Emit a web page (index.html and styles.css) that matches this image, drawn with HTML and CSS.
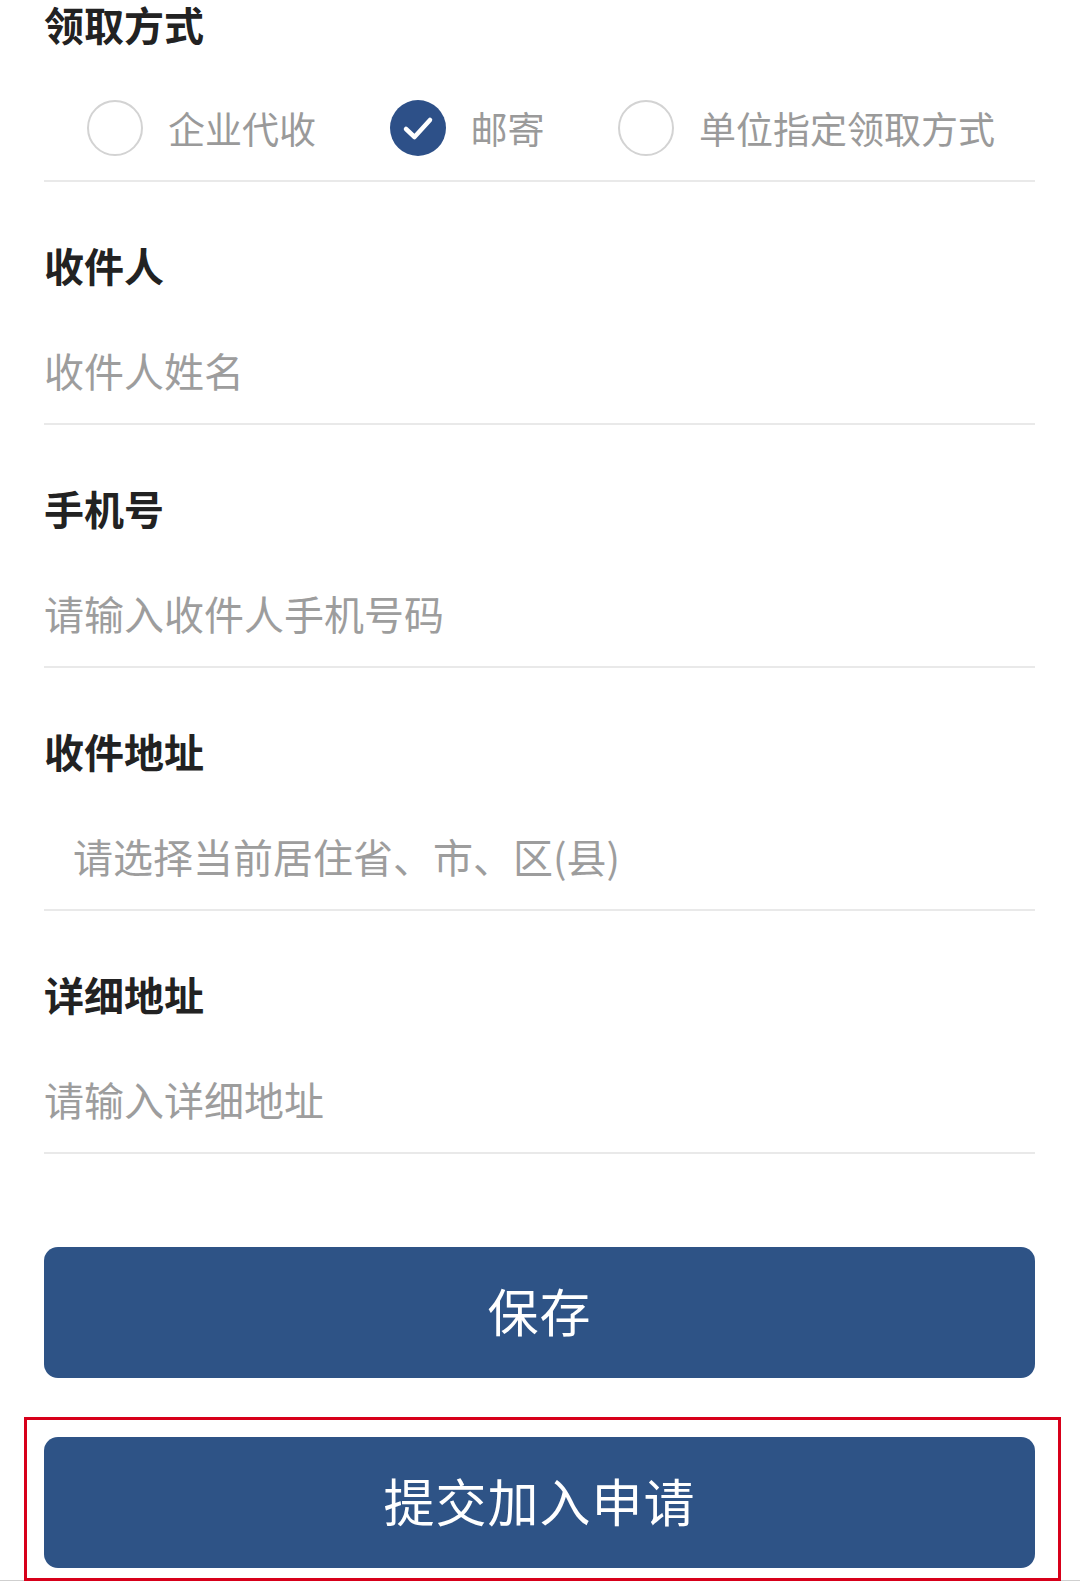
FILE: index.html
```html
<!DOCTYPE html>
<html lang="zh-CN">
<head>
  <meta charset="UTF-8">
  <title>领取方式</title>
  <link rel="stylesheet" href="styles.css">
</head>
<body>
  <div class="page">
    <div class="section pickup">
      <div class="section-title">领取方式</div>
      <div class="options">
        <label class="option">
          <span class="radio"></span>
          <span class="option-text">企业代收</span>
        </label>
        <label class="option">
          <span class="radio checked">
            <svg width="56" height="56" viewBox="0 0 56 56">
              <path d="M16 29 L24.5 37 L40 20" fill="none" stroke="#fff" stroke-width="4.5" stroke-linecap="round" stroke-linejoin="round"/>
            </svg>
          </span>
          <span class="option-text">邮寄</span>
        </label>
        <label class="option">
          <span class="radio"></span>
          <span class="option-text">单位指定领取方式</span>
        </label>
      </div>
    </div>

    <div class="section field">
      <div class="section-title">收件人</div>
      <input class="field-input" type="text" placeholder="收件人姓名">
    </div>

    <div class="section field">
      <div class="section-title">手机号</div>
      <input class="field-input" type="tel" placeholder="请输入收件人手机号码">
    </div>

    <div class="section field">
      <div class="section-title">收件地址</div>
      <div class="picker">请选择当前居住省、市、区(县)</div>
    </div>

    <div class="section field">
      <div class="section-title">详细地址</div>
      <input class="field-input" type="text" placeholder="请输入详细地址">
    </div>

    <button class="btn save" type="button">保存</button>

    <div class="submit-wrap">
      <button class="btn" type="button">提交加入申请</button>
      <div class="highlight"></div>
    </div>
  </div>
  <div class="bottom-bar"></div>
</body>
</html>
```

FILE: styles.css
```css
body {
  margin: 0;
  background: #fff;
  font-family: "Noto Sans CJK SC", "Noto Sans", sans-serif;
  color: #222;
}

.page {
  padding: 2px 45px 0 44px;
}

.section {
  border-bottom: 2px solid #e9e9e9;
}

.section-title {
  font-size: 40px;
  font-weight: 700;
  line-height: 48px;
  color: #222;
}

.pickup .section-title {
  line-height: 44px;
}

.options {
  display: flex;
  justify-content: space-between;
  align-items: center;
  padding: 0 40px 0 43px;
  margin-top: 54px;
  padding-bottom: 24px;
}

.option {
  display: flex;
  align-items: center;
  gap: 25px;
}

.radio {
  width: 56px;
  height: 56px;
  box-sizing: border-box;
  border: 2px solid #d3d3d3;
  border-radius: 50%;
  display: block;
}

.radio.checked {
  border: none;
  background: #2d5088;
}

.radio svg {
  display: block;
}

.option-text {
  font-size: 37px;
  line-height: 56px;
  color: #9a9a9a;
}

.field .section-title {
  margin-top: 59px;
}

.field-input,
.picker {
  display: block;
  width: 100%;
  height: 48px;
  margin-top: 57px;
  margin-bottom: 29px;
  padding: 0;
  border: none;
  outline: none;
  font-family: inherit;
  font-size: 40px;
  line-height: 48px;
  color: #333;
  background: transparent;
}

.field-input::placeholder {
  color: #9d9d9d;
}

.picker {
  padding-left: 29px;
  box-sizing: border-box;
  color: #9d9d9d;
}

.btn {
  display: block;
  width: 100%;
  height: 131px;
  padding: 0 0 6px;
  border: none;
  border-radius: 14px;
  background: #2e5386;
  color: #fff;
  font-family: inherit;
  font-size: 51px;
  letter-spacing: 1px;
}

.save {
  margin-top: 93px;
}

.submit-wrap {
  position: relative;
  margin-top: 59px;
}

.highlight {
  position: absolute;
  left: -20px;
  right: -26px;
  top: -20px;
  bottom: -13px;
  border: 3px solid #d7001a;
}

.bottom-bar {
  margin-top: 12px;
  border-top: 1px solid #cfcfcf;
}
```
